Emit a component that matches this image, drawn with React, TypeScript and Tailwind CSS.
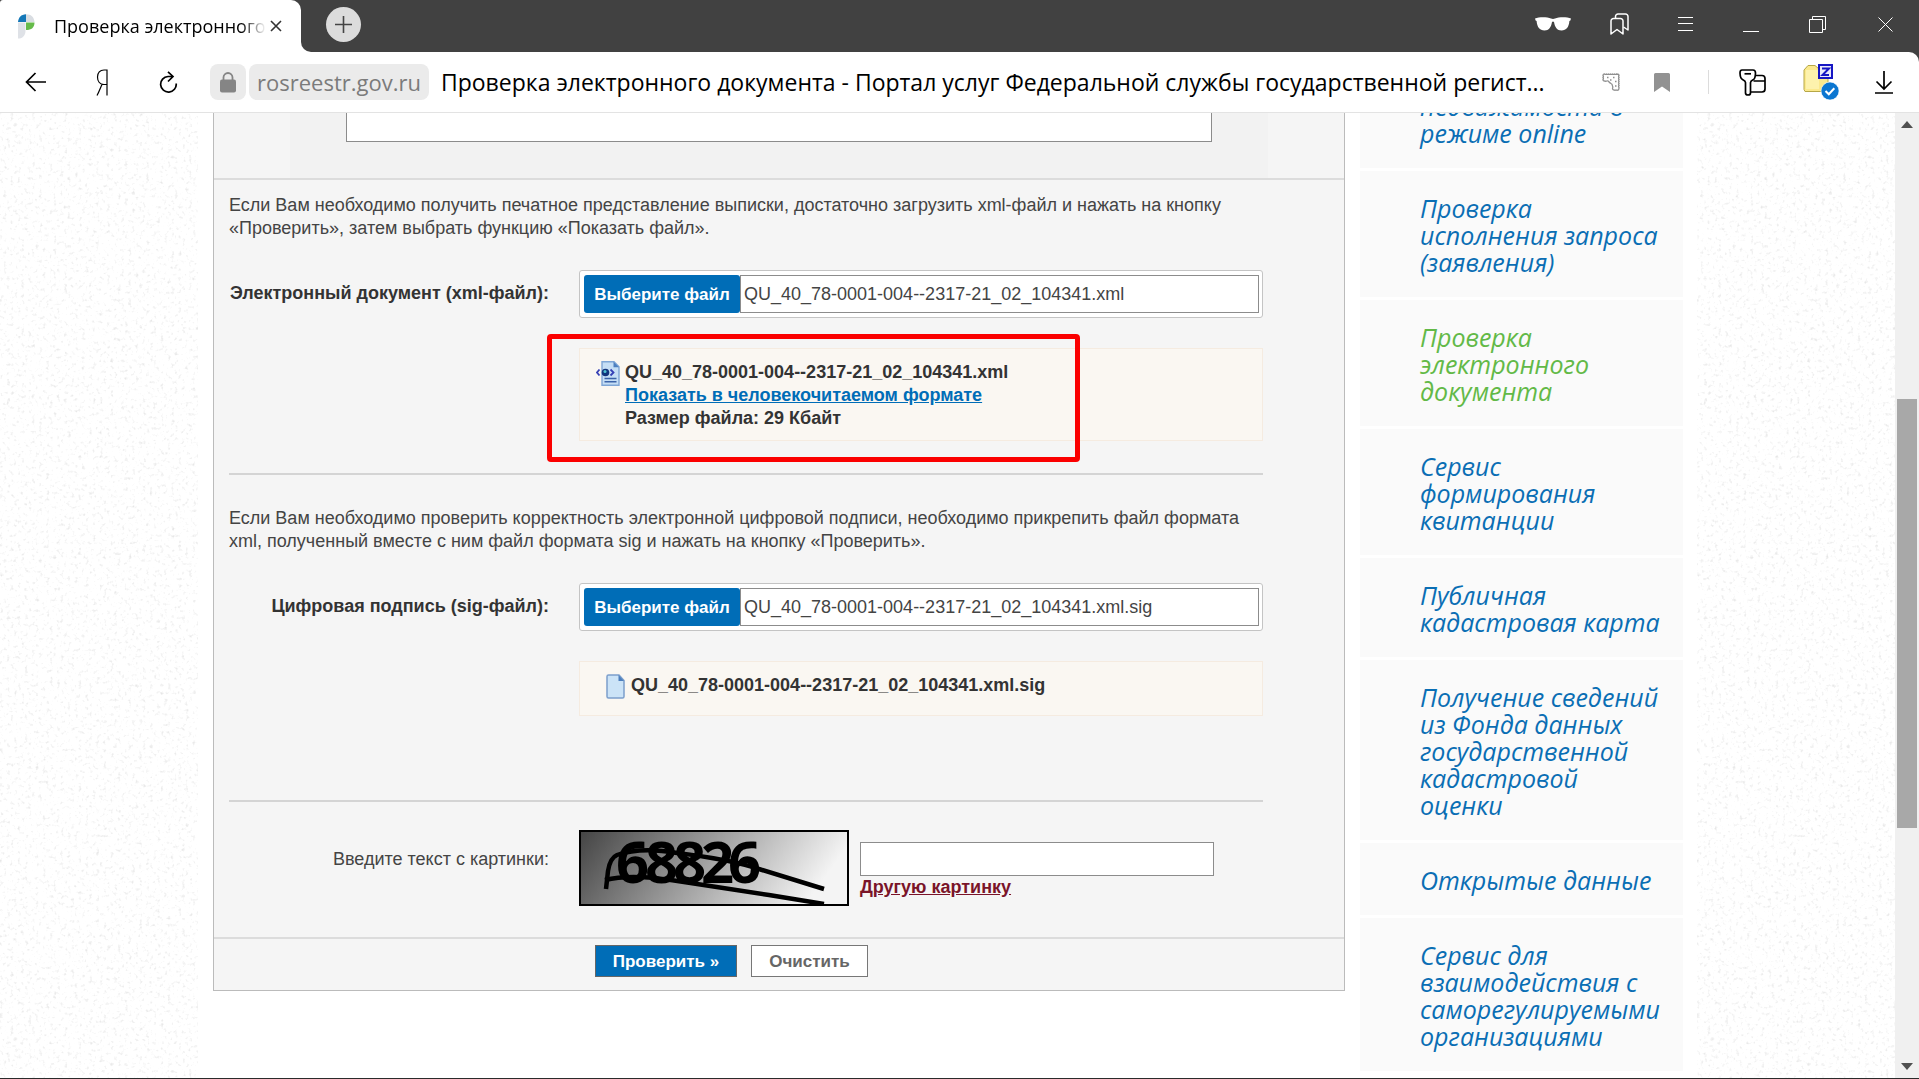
import React from "react";

const services = [
  { title: "недвижимости в режиме online" },
  { title: "Проверка исполнения запроса (заявления)" },
  { title: "Проверка электронного документа", active: true },
  { title: "Сервис формирования квитанции" },
  { title: "Публичная кадастровая карта" },
  { title: "Получение сведений из Фонда данных государственной кадастровой оценки" },
  { title: "Открытые данные" },
  { title: "Сервис для взаимодействия с саморегулируемыми организациями" },
];

function Favicon() {
  return (
    <svg width="17" height="25" viewBox="0 0 17 25" className="shrink-0">
      <path d="M0 8C.5 3.500 3 .5 8 .3V8z" fill="#1478b8" />
      <path d="M8 .3C13 .3 16 3 16.500 8H8z" fill="#d9dde2" />
      <path d="M8 8.500h8.500c0 5-3 7.500-8.500 7.500z" fill="#66bb4a" />
      <path d="M0 8.500h7.500V17c0 4-2.500 7-6 7.500H0z" fill="#dfe2e7" />
    </svg>
  );
}

function Titlebar() {
  return (
    <div className="flex h-[52px] shrink-0 bg-[#414141]">
      <div className="flex w-[301px] items-center rounded-tl-[3px] rounded-tr-[10px] bg-white pl-[18px]">
        <Favicon />
        <span className="ml-[19px] w-[212px] overflow-hidden text-[18px] leading-7 whitespace-nowrap [mask-image:linear-gradient(to_right,black_88%,transparent)]">
          Проверка электронного
        </span>
        <button aria-label="Закрыть вкладку" className="p-1">
          <svg width="12" height="12" viewBox="0 0 12 12" stroke="#333" strokeWidth="1.600">
            <path d="M1 1l10 10M11 1L1 11" />
          </svg>
        </button>
      </div>
      <div className="w-3 self-stretch bg-white">
        <div className="h-full rounded-bl-[10px] bg-[#414141]" />
      </div>
      <div className="flex flex-1 items-center justify-between pb-1">
        <button aria-label="Новая вкладка" className="ml-[13px] flex size-[35px] items-center justify-center rounded-full bg-[#dcdcdc]">
          <svg width="17" height="17" viewBox="0 0 17 17" stroke="#444" strokeWidth="1.600">
            <path d="M8.500 0v17M0 8.500h17" />
          </svg>
        </button>
        <div className="flex items-center text-white">
          <button aria-label="Режим инкогнито" className="mr-[39px]">
            <svg width="36" height="14" viewBox="0 0 36 14" fill="currentColor">
              <path d="M0 1.500C4-.2 12-.2 16 1.500q2 .8 4 0c4-1.700 12-1.700 16 0l-.6 2-1 .4c-.5 6-3 9.500-7.900 9.500-4.500 0-6.500-3-7.500-8.500q-1-1-2 0c-1 5.500-3 8.500-7.500 8.500-4.900 0-7.400-3.500-7.900-9.500l-1-.4z" />
            </svg>
          </button>
          <button aria-label="Закладки" className="mr-[49px]">
            <svg width="19" height="22" viewBox="0 0 19 22" fill="none" stroke="currentColor" strokeWidth="1.500" strokeLinejoin="round">
              <path d="M1 8a2.500 2.500 0 0 1 2.500-2.500h7A2.500 2.500 0 0 1 13 8v13l-6-4.500L1 21z" />
              <path d="M5.500 5.500V3.500A2.500 2.500 0 0 1 8 1h7.500A2.500 2.500 0 0 1 18 3.500V17l-4.500-3" />
            </svg>
          </button>
          <button aria-label="Меню" className="mr-[50px]">
            <svg width="15" height="14" viewBox="0 0 15 14" stroke="currentColor" strokeWidth="1">
              <path d="M0 .5h15M0 6.500h15M0 13.500h15" />
            </svg>
          </button>
          <button aria-label="Свернуть" className="mr-[50px]">
            <svg width="16" height="16" viewBox="0 0 16 16" stroke="currentColor">
              <path d="M0 15.500h16" />
            </svg>
          </button>
          <button aria-label="Развернуть" className="mr-[52px]">
            <svg width="17" height="17" viewBox="0 0 17 17" fill="none" stroke="currentColor">
              <path d="M.5 3.500h13v13H.5zM3.500 3.500v-3h13v13h-3" />
            </svg>
          </button>
          <button aria-label="Закрыть" className="mr-[26px]">
            <svg width="15" height="15" viewBox="0 0 15 15" stroke="currentColor">
              <path d="M.5 .5l14 14M14.500 .5l-14 14" />
            </svg>
          </button>
        </div>
      </div>
    </div>
  );
}

function Toolbar() {
  return (
    <div className="shrink-0 bg-[#414141]">
      <div className="flex h-[61px] items-center rounded-tr-[10px] border-b border-[#e3e3e3] bg-white">
        <button aria-label="Назад" className="ml-[25px]">
          <svg width="21" height="20" viewBox="0 0 21 20" fill="none" stroke="#000" strokeWidth="1.700">
            <path d="M21 10H1.500M10.500 1l-9 9 9 9" />
          </svg>
        </button>
        <button aria-label="Яндекс" className="ml-[50px]">
          <svg width="12" height="27" viewBox="0 0 12 27" fill="none" stroke="#000" strokeWidth="1.200">
            <path d="M11 26.500V1H8C4 1 1.500 3.500 1.500 8s2.500 7.500 6.500 7.500h3M6 15.500C4.500 18.500 3.500 22 1 26.500" />
          </svg>
        </button>
        <button aria-label="Обновить" className="ml-[51px]">
          <svg width="19" height="22" viewBox="0 0 19 22" fill="none" stroke="#000" strokeWidth="1.700">
            <path d="M13.500 5.500H9a7.800 7.800 0 1 0 8.200 7M9 .8l5 4.700-5 5" />
          </svg>
        </button>
        <button aria-label="Защищённое соединение" className="ml-8 flex h-9 w-9 items-center justify-center rounded-lg bg-[#ebebeb]">
          <svg width="16" height="21" viewBox="0 0 16 21">
            <rect y="7.500" width="16" height="13" rx="2" fill="#858585" />
            <path d="M3.500 8V5.500a4.500 4.500 0 0 1 9 0V8" fill="none" stroke="#858585" strokeWidth="1.800" />
          </svg>
        </button>
        <a href="#" className="ml-[3px] rounded-lg bg-[#ebebeb] px-2 text-[22px] leading-9 text-[#7b7b7b]">rosreestr.gov.ru</a>
        <span className="ml-3 min-w-0 flex-1 truncate text-[23px] leading-9">
          Проверка электронного документа - Портал услуг Федеральной службы государственной регист...
        </span>
        <div className="flex shrink-0 items-center">
          <button aria-label="Отзыв" className="mr-[34px]">
            <svg width="18" height="18" viewBox="0 0 18 18" fill="none" stroke="#8f8f8f">
              <path
                d="M1 2.500q0-1.500 1.500-1.500 1 .8 2 0 1 .8 2 0 1 .8 2 0 1 .8 2 0 1 .8 2 0 1 .8 2 0Q17 1 17 2.500q-.8 1 0 2-.8 1 0 2-.8 1 0 2-.8 1 0 2-.8 1 0 2-.8 1 0 2 0 1.500-.5 2.500-1.500.5-2.500 0-1 .5-2 0-1.500 0-1.500-1.500.6-1.500 0-2.500-.2-2-1.500-2.500Q8 10 7 9 6.500 7.500 5 8 3.500 8.500 2.500 8 1 8 1 6.500q.8-1 0-2 .8-1 0-2z"
                strokeWidth="1.300"
              />
              <path d="M5 4.500h1.500M11 4.500h1.500M8 7h1.500M13 8.500h1.500M13 13h1.500" strokeWidth="1.600" />
            </svg>
          </button>
          <button aria-label="В закладки" className="mr-[38px]">
            <svg width="16" height="19" viewBox="0 0 16 19" fill="#929292">
              <path d="M0 1.500Q0 0 1.500 0h13Q16 0 16 1.500V19l-8-5.500L0 19z" />
            </svg>
          </button>
          <span className="mr-[30px] h-6 w-px bg-[#dcdcdc]" />
          <button aria-label="Пароли и карты" className="mr-[37px]">
            <svg width="27" height="27" viewBox="0 0 27 27" fill="none" stroke="#000" strokeWidth="1.700" strokeLinejoin="round">
              <path d="M3 1h11q2.500 0 2.500 3-.2 5.500-2 6.500-3 1.500-3 3V24q0 2-2.500 2T6.500 24V13.500q0-1.500-3-3Q1.200 9.500 1 4q0-3 2-3z" />
              <path d="M5.500 4.800h6.500" />
              <path d="M16.500 6.500H23a3 3 0 0 1 3 3V20a3 3 0 0 1-3 3H12M14.500 12H26" />
            </svg>
          </button>
          <button aria-label="Расширение" className="mr-[36px]">
            <svg width="36" height="36" viewBox="0 0 36 36">
              <path d="M1 6l4-4.500h7L16 5h9v20l-2 2.500H2l-1-2z" fill="#fbe98d" stroke="#b6a747" />
              <path d="M3 6h13v19H3z" fill="#fdf2ad" />
              <rect x="16" y="1" width="13" height="13" fill="#e9e9fb" stroke="#1616c4" strokeWidth="2" />
              <path d="M19 4.500h7l-6.500 6.500H26" fill="none" stroke="#1616c4" strokeWidth="2" />
              <circle cx="27" cy="27" r="9" fill="#0b76d1" stroke="#fff" strokeWidth=".6" />
              <path d="M22.500 27l3.300 3.300 5.500-6" fill="none" stroke="#fff" strokeWidth="2" />
            </svg>
          </button>
          <button aria-label="Загрузки" className="mr-[26px]">
            <svg width="18" height="23" viewBox="0 0 18 23" fill="none" stroke="#000" strokeWidth="1.700">
              <path d="M9 0v18M1.500 10.500L9 18l7.500-7.500M0 22h18" />
            </svg>
          </button>
        </div>
      </div>
    </div>
  );
}

// speckled paper texture on both sides of the page
function Speckle({ id }: { id: string }) {
  return (
    <div className="min-w-0 flex-1 overflow-hidden">
      <svg className="h-full w-full">
        <filter id={id} x="0" y="0" width="100%" height="100%">
          <feTurbulence type="fractalNoise" baseFrequency="0.280" numOctaves="2" seed="4" />
          <feColorMatrix values="0 0 0 0 0.600  0 0 0 0 0.600  0 0 0 0 0.600  1.400 0 0 0 -0.800" />
        </filter>
        <rect width="100%" height="100%" filter={`url(#${id})`} />
      </svg>
    </div>
  );
}

function FileField({ id, label, value }: { id: string; label: string; value: string }) {
  return (
    <div className="mt-[30px] grid grid-cols-[320px_1fr] gap-x-[30px]">
      <label htmlFor={id} className="pt-3 text-right font-bold whitespace-nowrap text-[#333]">{label}</label>
      <div className="flex h-12 rounded-[3px] border border-[#c4c4c4] bg-white py-1 pr-[3px] pl-1">
        <button className="w-[156px] shrink-0 rounded-[3px] bg-[#006db7] text-[17px] font-bold text-white">Выберите файл</button>
        <input id={id} readOnly value={value} className="min-w-0 flex-1 border border-[#8c8c8c] bg-white px-[3px]" />
      </div>
    </div>
  );
}

function XmlIcon() {
  return (
    <svg width="24" height="25" viewBox="0 0 24 25" className="shrink-0">
      <path d="M6 .8h12l5 5v18.400H6z" fill="#c5def5" stroke="#7fa6d6" strokeWidth="1.400" />
      <path d="M17.500 .8v5.500H23z" fill="#4d80c0" />
      <path d="M8.500 17.500h12M8.500 20.800h12" stroke="#3a62a8" strokeWidth="1.500" />
      <path d="M3.500 8.500L1 11.500l2.500 3M14.500 8.500l3 3-3 3" fill="none" stroke="#3540b5" strokeWidth="1.800" />
      <circle cx="9.500" cy="11.500" r="3.800" fill="#12357c" />
      <circle cx="9" cy="10.500" r="1.500" fill="#4fc3d0" />
    </svg>
  );
}

function FileIcon() {
  return (
    <svg width="19" height="25" viewBox="0 0 19 25" className="shrink-0">
      <path d="M2.500 1H13l5 5.500V22.500q0 1.500-1.500 1.500h-14Q1 24 1 22.500v-20Q1 1 2.500 1z" fill="#cbe3f7" stroke="#7c9fcc" strokeWidth="1.500" />
      <path d="M12.500 1v6H18z" fill="#4d7fbd" />
    </svg>
  );
}

function Captcha() {
  return (
    <svg width="270" height="76" viewBox="0 0 270 76" role="img" aria-label="Картинка с кодом" className="shrink-0">
      <defs>
        <linearGradient id="captcha" x1="0" y1="0" x2="1" y2="0.200">
          <stop offset="0" stopColor="#444" />
          <stop offset="1" stopColor="#f4f4f4" />
        </linearGradient>
      </defs>
      <rect x="1" y="1" width="268" height="74" fill="url(#captcha)" stroke="#000" strokeWidth="2" />
      <text x="37 66 94 122 149" y="53" fontSize="58" fontWeight="700" fontFamily="Open Sans, sans-serif">68826</text>
      <path d="M27 59L29 41Q31 28 38 25C55 19 75 19 98 23C140 28 165 34 180 39L245 59" fill="none" stroke="#000" strokeWidth="4.500" />
      <path d="M26 50C50 44 80 48 105 52L190 65L245 74" fill="none" stroke="#000" strokeWidth="4.500" />
    </svg>
  );
}

function DocumentForm() {
  return (
    <form className="-mt-[33px] min-w-0 flex-1 self-start border border-[#bbb] bg-[#f5f5f5] font-['Liberation_Sans',sans-serif] text-[18px] leading-[23px] text-[#444]">
      <div className="border-b-2 border-[#dcdcdc] px-[76px]">
        <div className="bg-[#f2f2f2] px-14 pb-9">
          <textarea aria-label="Сообщение" className="block h-[61px] w-full resize-none border border-[#8c8c8c] bg-white" />
        </div>
      </div>
      <div className="pr-[81px] pb-[31px] pl-[15px]">
        <p className="pt-[14px]">
          Если Вам необходимо получить печатное представление выписки, достаточно загрузить xml-файл и нажать на кнопку «Проверить», затем выбрать функцию «Показать файл».
        </p>
        <FileField id="xml" label="Электронный документ (xml-файл):" value="QU_40_78-0001-004--2317-21_02_104341.xml" />
        <div className="relative mt-[30px] ml-[350px] flex gap-[5px] border border-[#f5ebe0] bg-[#faf7f2] pt-3 pb-[10px] pl-4 font-bold text-[#333]">
          <XmlIcon />
          <div>
            <p>QU_40_78-0001-004--2317-21_02_104341.xml</p>
            <a href="#" className="text-[#006db7] underline">Показать в человекочитаемом формате</a>
            <p>Размер файла: 29 Кбайт</p>
          </div>
          <div className="pointer-events-none absolute -top-[15px] -left-[33px] h-[128px] w-[533px] rounded-[4px] border-[5px] border-[#fb0000]" />
        </div>
        <hr className="mt-8 border-t-2 border-[#d4d4d4]" />
        <p className="pt-8">
          Если Вам необходимо проверить корректность электронной цифровой подписи, необходимо прикрепить файл формата xml, полученный вместе с ним файл формата sig и нажать на кнопку «Проверить».
        </p>
        <FileField id="sig" label="Цифровая подпись (sig-файл):" value="QU_40_78-0001-004--2317-21_02_104341.xml.sig" />
        <div className="mt-[30px] ml-[350px] flex gap-[6px] border border-[#f5ebe0] bg-[#faf7f2] pt-3 pb-4 pl-[26px] font-bold text-[#333]">
          <FileIcon />
          <p>QU_40_78-0001-004--2317-21_02_104341.xml.sig</p>
        </div>
        <hr className="mt-[84px] border-t-2 border-[#d4d4d4]" />
        <div className="mt-7 grid grid-cols-[320px_1fr] gap-x-[30px]">
          <label htmlFor="code" className="pt-[18px] text-right">Введите текст с картинки:</label>
          <div className="flex gap-[11px]">
            <Captcha />
            <div className="flex flex-col items-start pt-3">
              <input id="code" className="h-[34px] w-[354px] border border-[#8c8c8c] bg-white px-1" />
              <a href="#" className="font-bold text-[#7a1429] underline">Другую картинку</a>
            </div>
          </div>
        </div>
      </div>
      <div className="flex gap-[14px] border-t-2 border-[#dcdcdc] pt-[6px] pb-[13px] pl-[381px] text-[17px] font-bold">
        <button className="h-8 w-[142px] border border-[#666] bg-[#006db7] text-white">Проверить »</button>
        <button className="h-8 w-[117px] border border-[#777] bg-white text-[#666]">Очистить</button>
      </div>
    </form>
  );
}

function ServiceMenu() {
  return (
    <nav className="-mt-11 flex w-[323px] shrink-0 flex-col gap-[3px] font-['Open_Sans',sans-serif]">
      {services.map((s) => (
        <a
          key={s.title}
          href="#"
          className={`bg-[#fafafa] pt-6 pr-5 pb-[21px] pl-[60px] text-[25px] leading-[27px] italic ${s.active ? "text-[#62b947]" : "text-[#0a6eb4]"}`}
        >
          {s.title}
        </a>
      ))}
    </nav>
  );
}

function Scrollbar() {
  return (
    <div className="flex w-6 shrink-0 flex-col items-center bg-[#f0f0f0] py-2">
      <svg width="12" height="7" viewBox="0 0 12 7" fill="#505050"><path d="M0 7l6-7 6 7z" /></svg>
      <div className="grow-[271]" />
      <div className="w-5 grow-[428] bg-[#a8a8a8]" />
      <div className="grow-[235]" />
      <svg width="12" height="7" viewBox="0 0 12 7" fill="#505050"><path d="M0 0l6 7 6-7z" /></svg>
    </div>
  );
}

export default function App() {
  return (
    <div className="flex h-screen flex-col overflow-hidden border-b border-[#2b2b2b] bg-white font-['Open_Sans',sans-serif] text-black">
      <Titlebar />
      <Toolbar />
      <div className="flex min-h-0 flex-1 overflow-hidden">
        <div className="flex min-w-0 flex-1">
          <Speckle id="speckle-left" />
          <div className="flex w-full max-w-[1499px] gap-[15px] overflow-hidden pr-[14px] pl-[15px]">
            <DocumentForm />
            <ServiceMenu />
          </div>
          <Speckle id="speckle-right" />
        </div>
        <Scrollbar />
      </div>
    </div>
  );
}
